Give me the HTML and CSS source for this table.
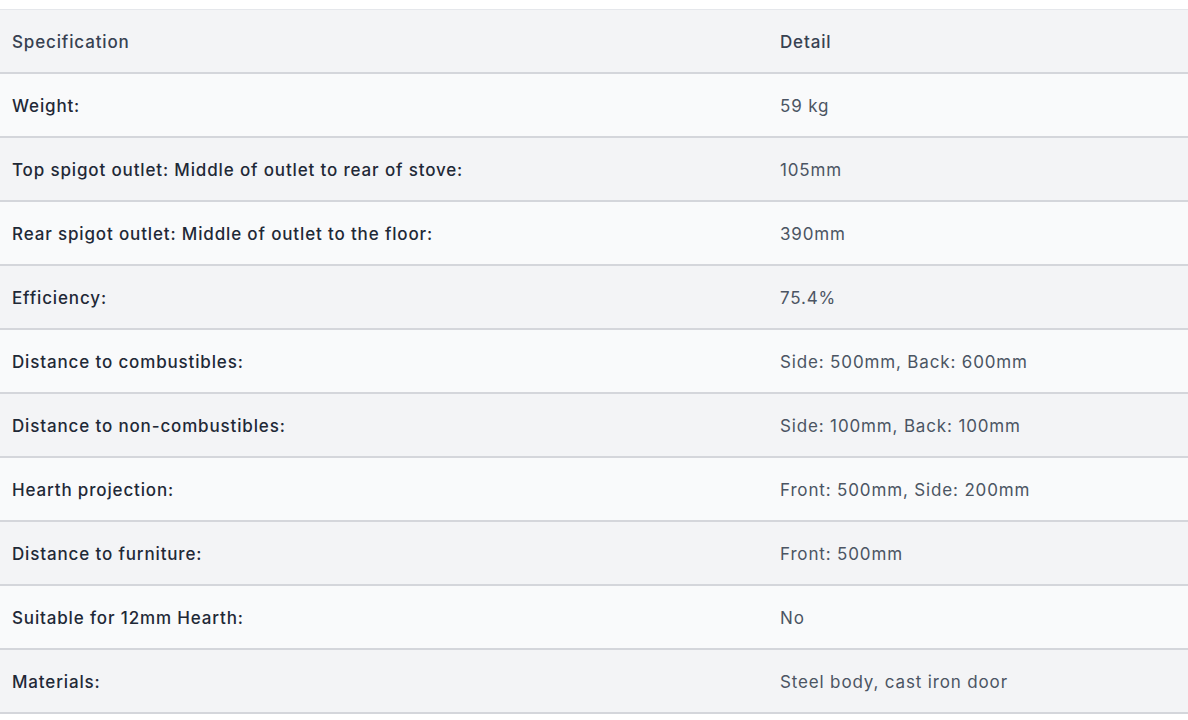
FILE: index.html
```html
<!DOCTYPE html>
<html lang="en">
<head>
    <meta charset="UTF-8">
    <meta name="viewport" content="width=device-width, initial-scale=1.0">
    <title>Specifications</title>
    <link rel="stylesheet" href="styles.css">
</head>
<body>
    <table class="spec-table">
        <thead>
            <tr>
                <th class="col-name">Specification</th>
                <th class="col-detail">Detail</th>
            </tr>
        </thead>
        <tbody>
            <tr><td class="name">Weight:</td><td class="detail">59 kg</td></tr>
            <tr><td class="name">Top spigot outlet: Middle of outlet to rear of stove:</td><td class="detail">105mm</td></tr>
            <tr><td class="name">Rear spigot outlet: Middle of outlet to the floor:</td><td class="detail">390mm</td></tr>
            <tr><td class="name">Efficiency:</td><td class="detail">75.4%</td></tr>
            <tr><td class="name">Distance to combustibles:</td><td class="detail">Side: 500mm, Back: 600mm</td></tr>
            <tr><td class="name">Distance to non-combustibles:</td><td class="detail">Side: 100mm, Back: 100mm</td></tr>
            <tr><td class="name">Hearth projection:</td><td class="detail">Front: 500mm, Side: 200mm</td></tr>
            <tr><td class="name">Distance to furniture:</td><td class="detail">Front: 500mm</td></tr>
            <tr><td class="name">Suitable for 12mm Hearth:</td><td class="detail">No</td></tr>
            <tr><td class="name">Materials:</td><td class="detail">Steel body, cast iron door</td></tr>
        </tbody>
    </table>
</body>
</html>
```

FILE: styles.css
```css
body {
    margin: 0;
    padding-top: 9px;
    background-color: #ffffff;
}
* {
    font-family: Inter, "Noto Sans", "Liberation Sans", sans-serif;
}
.spec-table {
    width: 100%;
    border-collapse: collapse;
    border-top: 1px solid #e5e7eb;
    font-size: 17px;
}
.spec-table th,
.spec-table td {
    height: 61px;
    padding: 1px 12px 0;
    text-align: left;
    vertical-align: middle;
    border-bottom: 2px solid #d4d6db;
    letter-spacing: 0.85px;
}
.spec-table th {
    font-weight: 500;
    color: #374151;
    background-color: #f3f4f6;
}
.col-name {
    width: 744px;
}
.spec-table tbody tr:nth-child(odd) {
    background-color: #f9fafb;
}
.spec-table tbody tr:nth-child(even) {
    background-color: #f3f4f6;
}
.name {
    font-weight: 500;
    color: #1f2937;
}
.detail {
    color: #4b5563;
}
```
